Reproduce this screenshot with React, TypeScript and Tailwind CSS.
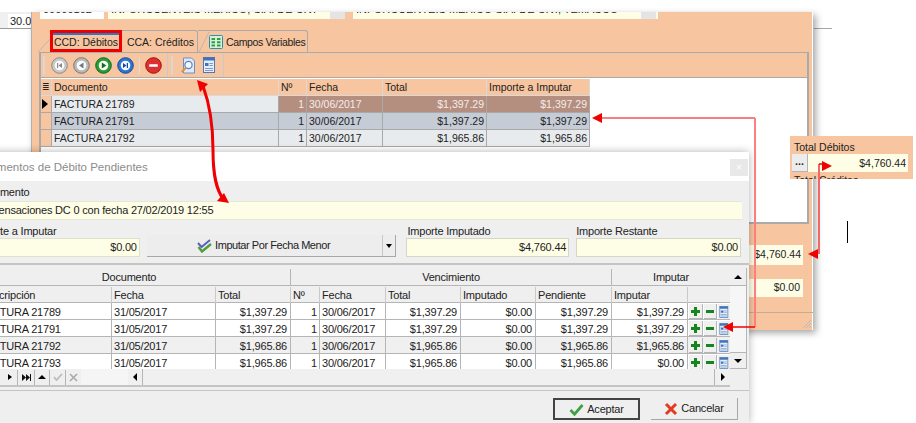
import React from 'react';

const backRows = [
  { doc: 'FACTURA 21789', date: '30/06/2017', total: '$1,397.29', amount: '$1,397.29', current: true, bg: 'bg-[#e8ebee]' },
  { doc: 'FACTURA 21791', date: '30/06/2017', total: '$1,397.29', amount: '$1,397.29', current: false, bg: 'bg-[#c5ccd6]' },
  { doc: 'FACTURA 21792', date: '30/06/2017', total: '$1,965.86', amount: '$1,965.86', current: false, bg: 'bg-[#e8ebee]' }
];

const dialogRows = [
  { doc: 'FACTURA 21789', total: '$1,397.29', imputar: '$1,397.29', bg: 'bg-white' },
  { doc: 'FACTURA 21791', total: '$1,397.29', imputar: '$1,397.29', bg: 'bg-white' },
  { doc: 'FACTURA 21792', total: '$1,965.86', imputar: '$1,965.86', bg: 'bg-[#f0f0f0]' },
  { doc: 'FACTURA 21793', total: '$1,965.86', imputar: '$0.00', bg: 'bg-white' }
];

const dialogCols = 'grid grid-cols-[144px_104px_75px_29px_66px_75px_75px_76px_76px_42px]';

function RoundIcon({ color, dark, kind }: { color: string; dark: string; kind: 'first' | 'prev' | 'next' | 'last' | 'stop' }) {
  return (
    <svg width="17" height="17" viewBox="0 0 17 17">
      <circle cx="8.5" cy="8.5" r="7.8" fill={color} stroke={dark} strokeWidth="1" />
      <circle cx="8.5" cy="8.5" r="4.8" fill="#fff" opacity={kind === 'stop' ? 0 : 0.95} />
      {kind === 'first' && <path d="M6 6h1.200v5H6zM11 6v5L7.500 8.500z" fill={dark} />}
      {kind === 'prev' && <path d="M10.500 5.500v6L6 8.500z" fill={dark} />}
      {kind === 'next' && <path d="M6.800 5.500v6l4.500-3z" fill={dark} />}
      {kind === 'last' && <path d="M6 6v5l3.500-2.500zM9.800 6H11v5H9.800z" fill={dark} />}
      {kind === 'stop' && <rect x="4.200" y="7.200" width="8.600" height="2.600" rx="0.600" fill="#fff" />}
    </svg>
  );
}

function SearchDocIcon() {
  return (
    <svg width="16" height="17" viewBox="0 0 16 17">
      <path d="M3.500 1h8l3 3v12h-11z" fill="#dfe9f7" stroke="#6f8fc4" />
      <circle cx="8.500" cy="8" r="3.600" fill="#f4f8ff" stroke="#5d83bd" strokeWidth="1.200" />
      <path d="M5.800 10.800L1.800 15" stroke="#d69a3a" strokeWidth="2.200" />
    </svg>
  );
}

function FormIcon({ size = 16 }: { size?: number }) {
  return (
    <svg width={size} height={size} viewBox="0 0 16 16">
      <rect x="2.500" y="0.500" width="11" height="15" fill="#e5eefa" stroke="#4f79b5" />
      <rect x="2.500" y="0.500" width="11" height="3" fill="#3f74bd" />
      <rect x="4" y="6" width="3.500" height="3" fill="#3f74bd" />
      <path d="M8.500 6.500h3.500M8.500 8.500h3.500M4 11.500h8M4 13.500h8" stroke="#7d9cc9" />
    </svg>
  );
}

function CheckIcon({ double }: { double?: boolean }) {
  if (double) {
    return (
      <svg width="15" height="14" viewBox="0 0 15 14">
        <path d="M1 4l3.500 4L13 1" fill="none" stroke="#5b62b8" strokeWidth="2" />
        <path d="M1.500 8l3.500 4.500L14 5" fill="none" stroke="#4f9e3c" strokeWidth="2.400" />
      </svg>
    );
  }
  return (
    <svg width="15" height="13" viewBox="0 0 15 13">
      <path d="M1.500 7l4 4.200L13.500 2" fill="none" stroke="#43a047" strokeWidth="2.800" />
    </svg>
  );
}

function RowActions() {
  return (
    <div className="flex items-center gap-[1px] pl-[1px]">
      <span className="flex h-[15px] w-[14px] items-center justify-center border-b border-r border-[#b5b5b5] bg-[#f0f0f0] text-[#17851f]">
        <svg width="9" height="9" viewBox="0 0 9 9"><path d="M3 0h3v3h3v3H6v3H3V6H0V3h3z" fill="currentColor" /></svg>
      </span>
      <span className="flex h-[15px] w-[14px] items-center justify-center border-b border-r border-[#b5b5b5] bg-[#f0f0f0] text-[#17851f]">
        <span className="h-[3px] w-[8px] bg-current" />
      </span>
      <span className="flex h-[15px] w-[12px] items-center justify-center overflow-hidden bg-[#f0f0f0]">
        <FormIcon size={12} />
      </span>
    </div>
  );
}

function BackWindow() {
  return (
    <div className="absolute left-[31px] top-[12px] flex h-[318px] w-[782px] flex-col overflow-hidden bg-[#f7c59f] text-[10.5px] text-[#222] shadow-[inset_1px_0_0_#b0b0b0,inset_-1px_0_0_#fff,3px_3px_7px_rgba(0,0,0,0.35)]">
      <div className="flex h-[8px] gap-[4px] overflow-hidden pl-[9px] text-[11px] leading-[14px]">
        <div className="-mt-[10px] h-[17px] w-[64px] bg-white pl-[3px]">00000102</div>
        <div className="-mt-[10px] flex h-[17px] w-[237px] justify-between bg-[#fefee6] pl-[3px]">
          <span>INFORCUENTEIS MEXICO, S.A. DE C.V.</span>
          <span className="w-[15px] bg-[#e4e4e4]" />
        </div>
        <div className="-mt-[10px] ml-[4px] flex h-[17px] w-[305px] justify-between bg-[#fefee6] pl-[3px]">
          <span>INFORCUENTEIS MEXICO S.A. DE C.V., TEMASCO</span>
          <span className="mr-[2px] w-[15px] bg-[#e4e4e4]" />
        </div>
      </div>

      {/* tabs */}
      <div className="relative mt-[10px] flex h-[22px] pl-[19px] text-[10.5px] leading-none">
        <svg className="absolute left-[7px] top-[4px]" width="13" height="18" viewBox="0 0 13 18">
          <path d="M0 18L13 4" stroke="#b8b8b8" fill="none" />
        </svg>
        <div className="z-10 flex w-[72px] flex-col border-[3px] border-[#ee0000]">
          <span className="h-[2px] bg-[#2b78c9]" />
          <span className="flex flex-1 items-center justify-center whitespace-nowrap">CCD: Débitos</span>
        </div>
        <div className="flex w-[76px] items-center justify-center whitespace-nowrap rounded-tr-[3px] border-r border-t border-[#aaa] pl-[2px] pt-[1px]">
          CCA: Créditos
        </div>
        <svg className="absolute left-[167px] top-[1px]" width="12" height="21" viewBox="0 0 12 21">
          <path d="M1 21L11 1" stroke="#b8b8b8" fill="none" />
        </svg>
        <div className="flex w-[110px] items-center gap-[3px] whitespace-nowrap rounded-tr-[3px] border-r border-t border-[#aaa] pl-[11px] pt-[1px] tracking-[-0.35px]">
          <svg className="shrink-0" width="14" height="14" viewBox="0 0 14 14">
            <rect x="0.500" y="0.500" width="13" height="13" rx="1" fill="#d7f0dc" stroke="#2f8fa8" />
            <path d="M2.500 3h3.500v2H2.500zM8 3h3.500v2H8zM2.500 6.200h3.500v2H2.500zM8 6.200h3.500v2H8zM2.500 9.400h3.500v2H2.500zM8 9.400h3.500v2H8z" fill="#2f9e44" />
          </svg>
          Campos Variables
        </div>
      </div>

      {/* panel */}
      <div className="ml-[8px] flex h-[172px] w-[770px] flex-col border-2 border-t border-[#aaa]">
        <div className="flex h-[25px] shrink-0 border-b border-[#aaa]">
          <div className="flex w-[127px] items-center border-r border-[#c9c9c9] pl-[2px]">
            <span className="mr-[6px] h-[18px] w-[2px] bg-[#d8d8d8]" />
            <span className="flex gap-[5px]">
              <RoundIcon color="#c9c9c9" dark="#8a8a8a" kind="first" />
              <RoundIcon color="#b9b9b9" dark="#777" kind="prev" />
              <RoundIcon color="#2a9a35" dark="#14691d" kind="next" />
              <RoundIcon color="#2c74d3" dark="#174a96" kind="last" />
            </span>
            <span className="mx-[5px] h-[17px] w-[1px] bg-[#ddd]" />
            <RoundIcon color="#df3030" dark="#9c1414" kind="stop" />
          </div>
          <div className="ml-[1px] flex w-[55px] items-center border-r border-[#c9c9c9] pl-[2px]">
            <span className="mr-[7px] h-[18px] w-[2px] bg-[#d8d8d8]" />
            <SearchDocIcon />
            <span className="ml-[5px]"><FormIcon /></span>
          </div>
        </div>
        <div className="flex-1 bg-white pt-[1px]">
          <div className="grid w-[549px] grid-cols-[11px_227px_28px_76px_104px_103px]">
            {['≣', 'Documento', 'Nº', 'Fecha', 'Total', 'Importe a Imputar'].map((h) => (
              <div key={h} className="flex h-[17px] items-center border-b border-r border-[#d9d9d9] bg-[#f7c59f] pl-[2px] pt-[1px] leading-none">
                {h === '≣' ? <span className="-ml-[1px] text-[9px]">{h}</span> : h}
              </div>
            ))}
            {backRows.map((r) => {
              const rest = r.current ? 'bg-[#b48f80] text-[#f4ece8]' : `${r.bg} text-[#222]`;
              return (
                <React.Fragment key={r.doc}>
                  <div className="flex h-[17px] items-center border-b border-r border-[#a9a9a9] bg-[#f7c59f] pl-[1px]">
                    {r.current && <span className="h-0 w-0 border-y-[5px] border-l-[6px] border-y-transparent border-l-black" />}
                  </div>
                  <div className={`flex h-[17px] items-center border-b border-r border-[#a9a9a9] pl-[2px] pt-[1px] ${r.bg}`}>{r.doc}</div>
                  <div className={`flex h-[17px] items-center justify-end border-b border-r border-[#a9a9a9] pr-[2px] pt-[1px] ${rest}`}>1</div>
                  <div className={`flex h-[17px] items-center border-b border-r border-[#a9a9a9] pl-[2px] pt-[1px] ${rest}`}>{r.date}</div>
                  <div className={`flex h-[17px] items-center justify-end border-b border-r border-[#a9a9a9] pr-[2px] pt-[1px] ${rest}`}>{r.total}</div>
                  <div className={`flex h-[17px] items-center justify-end border-b border-r border-[#a9a9a9] pr-[2px] pt-[1px] ${rest}`}>{r.amount}</div>
                </React.Fragment>
              );
            })}
          </div>
        </div>
      </div>

      {/* totales */}
      <div className="mt-[21px] flex flex-col items-end pr-[10px] text-[10.5px]">
        <div className="flex h-[20px] w-[70px] items-center justify-end bg-[#fefee6] pr-[2px]">$4,760.44</div>
        <div className="mt-[14px] flex h-[18px] w-[70px] items-center justify-end bg-[#fefee6] pr-[3px]">$0.00</div>
      </div>
      <div className="mt-[15px] h-[1px] bg-[#c9a98f]" />
      <svg className="absolute bottom-[1px] right-[1px]" width="10" height="10" viewBox="0 0 10 10">
        <path d="M9 1L1 9M9 4L4 9M9 7L7 9" stroke="#b9b9b9" />
      </svg>
    </div>
  );
}

function PendingDialog() {
  return (
    <div className="absolute left-[-40px] top-[152px] flex h-[271px] w-[789px] flex-col overflow-hidden bg-[#efefef] text-[11px] tracking-[-0.2px] text-[#222] shadow-[0_0_8px_rgba(0,0,0,0.3)]">
      <div className="flex h-[29px] shrink-0 items-center justify-between bg-white pl-[10px] pr-[1px] pt-[2px] text-[11.5px] tracking-normal text-[#8b8b8b]">
        <span>Documentos de Débito Pendientes</span>
        <span className="flex h-[17px] w-[18px] items-center justify-center bg-[#e8e8e8] text-[10px] text-white">×</span>
      </div>
      <div className="px-[8px] pt-[5px]">
        <div className="h-[13px] pl-[7px] leading-[13px]">Documento</div>
        <div className="mt-[2px] flex h-[19px] w-[774px] items-center border-y border-[#e6e6d8] bg-[#fefee6] pl-[2px]">
          Compensaciones DC 0 con fecha 27/02/2019 12:55
        </div>
        <div className="mt-[5px] flex items-end">
          <div className="w-[172px]">
            <div className="h-[13px] pl-[5px] leading-[13px]">Importe a Imputar</div>
            <div className="flex h-[19px] items-center justify-end border border-[#e0e0d0] bg-[#fefee6] pr-[2px]">$0.00</div>
          </div>
          <div className="ml-[7px] flex h-[22px] w-[250px] border-b border-r border-[#a8a8a8] bg-[#ededed]">
            <div className="flex flex-1 items-center justify-center gap-[3px] pr-[2px] tracking-[-0.45px]">
              <CheckIcon double />
              Imputar Por Fecha Menor
            </div>
            <div className="flex w-[13px] items-center justify-center border-l border-[#c9c9c9]">
              <span className="h-0 w-0 border-x-[3.5px] border-t-[4px] border-x-transparent border-t-black" />
            </div>
          </div>
          <div className="ml-[10px] w-[163px]">
            <div className="h-[13px] pl-[1px] leading-[13px]">Importe Imputado</div>
            <div className="flex h-[19px] items-center justify-end border border-[#d6d6c8] bg-[#fefee6] pr-[2px]">$4,760.44</div>
          </div>
          <div className="ml-[7px] w-[165px]">
            <div className="h-[13px] leading-[13px]">Importe Restante</div>
            <div className="flex h-[19px] items-center justify-end border border-[#d6d6c8] bg-[#fefee6] pr-[2px]">$0.00</div>
          </div>
        </div>
      </div>

      <div className="mt-[6px] h-[2px] bg-[#c4c4c4]" />

      {/* grilla */}
      <div className="mt-[3px] flex h-[119px] pl-[8px]">
        <div className="flex w-[762px] flex-col">
          <div className="h-[101px] shrink-0 overflow-hidden">
            <div className="grid h-[18px] grid-cols-[323px_321px_118px] border-b border-[#b5b5b5] pt-[1px]">
              <div className="flex items-center justify-center border-r border-[#b5b5b5]">Documento</div>
              <div className="flex items-center justify-center border-r border-[#b5b5b5]">Vencimiento</div>
              <div className="flex items-center justify-center">Imputar</div>
            </div>
            <div className={`${dialogCols} h-[17px] border-b border-[#b5b5b5] pt-[1px]`}>
              {['Descripción', 'Fecha', 'Total', 'Nº', 'Fecha', 'Total', 'Imputado', 'Pendiente', 'Imputar', ''].map((h, i) => (
                <div key={i} className={`flex items-center border-r border-[#c9c9c9] last:border-r-0 ${i === 0 ? 'pl-[12px]' : 'pl-[2px]'}`}>{h}</div>
              ))}
            </div>
            {dialogRows.map((r) => (
              <div key={r.doc} className={`${dialogCols} h-[17px] border-b border-[#b5b5b5] ${r.bg}`}>
                <div className="flex items-center border-r border-[#b5b5b5] pl-[11px] pt-[1px]">{r.doc}</div>
                <div className="flex items-center border-r border-[#b5b5b5] pl-[2px] pt-[1px]">31/05/2017</div>
                <div className="flex items-center justify-end border-r border-[#b5b5b5] pr-[3px] pt-[1px]">{r.total}</div>
                <div className="flex items-center justify-end border-r border-[#b5b5b5] pr-[2px] pt-[1px]">1</div>
                <div className="flex items-center border-r border-[#b5b5b5] pl-[2px] pt-[1px]">30/06/2017</div>
                <div className="flex items-center justify-end border-r border-[#b5b5b5] pr-[3px] pt-[1px]">{r.total}</div>
                <div className="flex items-center justify-end border-r border-[#b5b5b5] pr-[3px] pt-[1px]">$0.00</div>
                <div className="flex items-center justify-end border-r border-[#b5b5b5] pr-[3px] pt-[1px]">{r.total}</div>
                <div className="flex items-center justify-end border-r border-[#b5b5b5] pr-[3px] pt-[1px]">{r.imputar}</div>
                <RowActions />
              </div>
            ))}
          </div>
          <div className="flex h-[18px] items-center border-b-2 border-[#c4c4c4]">
            <div className="flex h-[16px] w-[113px] items-center justify-end text-[#333]">
              <span className="flex h-[15px] w-[15px] items-center justify-center border-r border-[#b5b5b5]"><span className="h-0 w-0 border-y-[3.5px] border-l-[4px] border-y-transparent border-l-black" /></span>
              <span className="flex h-[15px] w-[17px] items-center justify-center border-r border-[#b5b5b5]">
                <svg width="9" height="7" viewBox="0 0 9 7"><path d="M0 0l4 3.500L0 7zM4 0l4 3.500L4 7zM8 0h1v7H8z" fill="#111" /></svg>
              </span>
              <span className="flex h-[15px] w-[15px] items-center justify-center border-r border-[#b5b5b5]"><span className="h-0 w-0 border-x-[4px] border-b-[4px] border-x-transparent border-b-black" /></span>
              <span className="flex h-[15px] w-[16px] items-center justify-center border-r border-[#b5b5b5]">
                <svg width="10" height="8" viewBox="0 0 10 8"><path d="M1 4l2.500 3L9 1" fill="none" stroke="#bbb" strokeWidth="1.800" /></svg>
              </span>
              <span className="flex h-[15px] w-[15px] items-center justify-center">
                <svg width="9" height="9" viewBox="0 0 9 9"><path d="M1 1l7 7M8 1L1 8" stroke="#aaa" strokeWidth="1.600" /></svg>
              </span>
            </div>
            <div className="h-[16px] w-[47px] bg-[#f5f5f5]" />
            <div className="flex h-[16px] flex-1 justify-between bg-[#f0f0f0]">
              <span className="flex w-[15px] items-center justify-center border-r border-[#b5b5b5]"><span className="h-0 w-0 border-y-[4px] border-r-[4px] border-y-transparent border-r-black" /></span>
              <span className="flex w-[16px] items-center justify-center border-l border-[#b5b5b5]"><span className="h-0 w-0 border-y-[4px] border-l-[4px] border-y-transparent border-l-black" /></span>
            </div>
          </div>
        </div>
        <div className="flex h-[101px] w-[17px] flex-col justify-between border-r border-[#b5b5b5] bg-[#f6f6f6]">
          <div className="flex h-[18px] items-center justify-center border-b border-[#b5b5b5] bg-[#efefef]">
            <span className="h-0 w-0 border-x-[4px] border-b-[4px] border-x-transparent border-b-black" />
          </div>
          <div className="flex h-[17px] items-center justify-center border-y border-[#b5b5b5] bg-[#efefef]">
            <span className="h-0 w-0 border-x-[4px] border-t-[4px] border-x-transparent border-t-black" />
          </div>
        </div>
      </div>
      <div className="mt-[3px] h-[1px] bg-[#c4c4c4]" />

      {/* botones */}
      <div className="mt-[7px] flex justify-end gap-[11px] pr-[11px]">
        <div className="flex h-[22px] w-[87px] items-center justify-center gap-[3px] border-2 border-[#444] bg-[#efefef]">
          <CheckIcon />
          Aceptar
        </div>
        <div className="flex h-[22px] w-[87px] items-center justify-center gap-[3px] border-b border-r border-[#a8a8a8] bg-[#efefef]">
          <svg width="14" height="14" viewBox="0 0 14 14">
            <path d="M2 2l10 10M12 2L2 12" stroke="#e53a1f" strokeWidth="3" />
          </svg>
          Cancelar
        </div>
      </div>
    </div>
  );
}

function TotalPopup() {
  return (
    <div className="absolute left-[790px] top-[136px] h-[43px] w-[123px] overflow-hidden bg-[#f7c59f] pl-[2px] text-[10.5px] leading-none text-[#222]">
      <div className="flex h-[18px] items-center pl-[2px] pt-[4px]">Total Débitos</div>
      <div className="flex h-[18px] w-[116px] items-center bg-[#fefee6]">
        <span className="flex h-[18px] w-[16px] items-center justify-center border-b border-r border-[#b5b5b5] bg-[#ececec] pb-[3px] font-bold">...</span>
        <span className="flex-1 pr-[2px] text-right">$4,760.44</span>
      </div>
      <div className="mt-[3px] pl-[2px]">Total Créditos</div>
    </div>
  );
}

function Annotations() {
  return (
    <svg className="pointer-events-none absolute left-0 top-0" width="916" height="423" viewBox="0 0 916 423">
      <path d="M203 86C210 105 213 125 213 150C213 175 216 190 224 200" fill="none" stroke="#f00000" strokeWidth="3" />
      <path d="M197 80L208 84L200 92z" fill="#f00000" />
      <path d="M229 203L217 201L224 193z" fill="#f00000" />
      <path d="M601 118H755" stroke="#f00000" strokeWidth="1.200" />
      <path d="M755 118V327" stroke="#ff7f80" strokeWidth="2" />
      <path d="M755 327H733" stroke="#f00000" strokeWidth="1.500" />
      <path d="M592 118L602 113V123z" fill="#f00000" />
      <path d="M723 327L733 322V332z" fill="#f00000" />
      <path d="M819 164V254" stroke="#f0696a" strokeWidth="2" />
      <path d="M819 164H824" stroke="#f00000" strokeWidth="1.500" />
      <path d="M832 166L822 161V171z" fill="#f00000" />
      <path d="M808 254L818 249V259z" fill="#f00000" />
    </svg>
  );
}

export default function App() {
  return (
    <div className="relative h-[423px] w-[916px] overflow-hidden bg-white font-['Liberation_Sans',Arial,sans-serif]">
      {/* ventana de atras, recortada */}
      <div className="absolute left-0 top-[12px] h-[17px] w-[31px] border-b border-[#9a9a9a] bg-[#f0f0f0]">
        <div className="ml-[8px] mt-[2px] h-[14px] w-[23px] overflow-hidden bg-white pl-[2px] text-[11px] leading-[14px] text-[#222]">30.00</div>
      </div>
      <div className="absolute left-[814px] top-[28px] h-[1px] w-[18px] bg-[#a8a8a8]" />
      <BackWindow />
      <TotalPopup />
      <PendingDialog />
      <div className="absolute left-[847px] top-[221px] h-[22px] w-[1px] bg-black" />
      <Annotations />
    </div>
  );
}
